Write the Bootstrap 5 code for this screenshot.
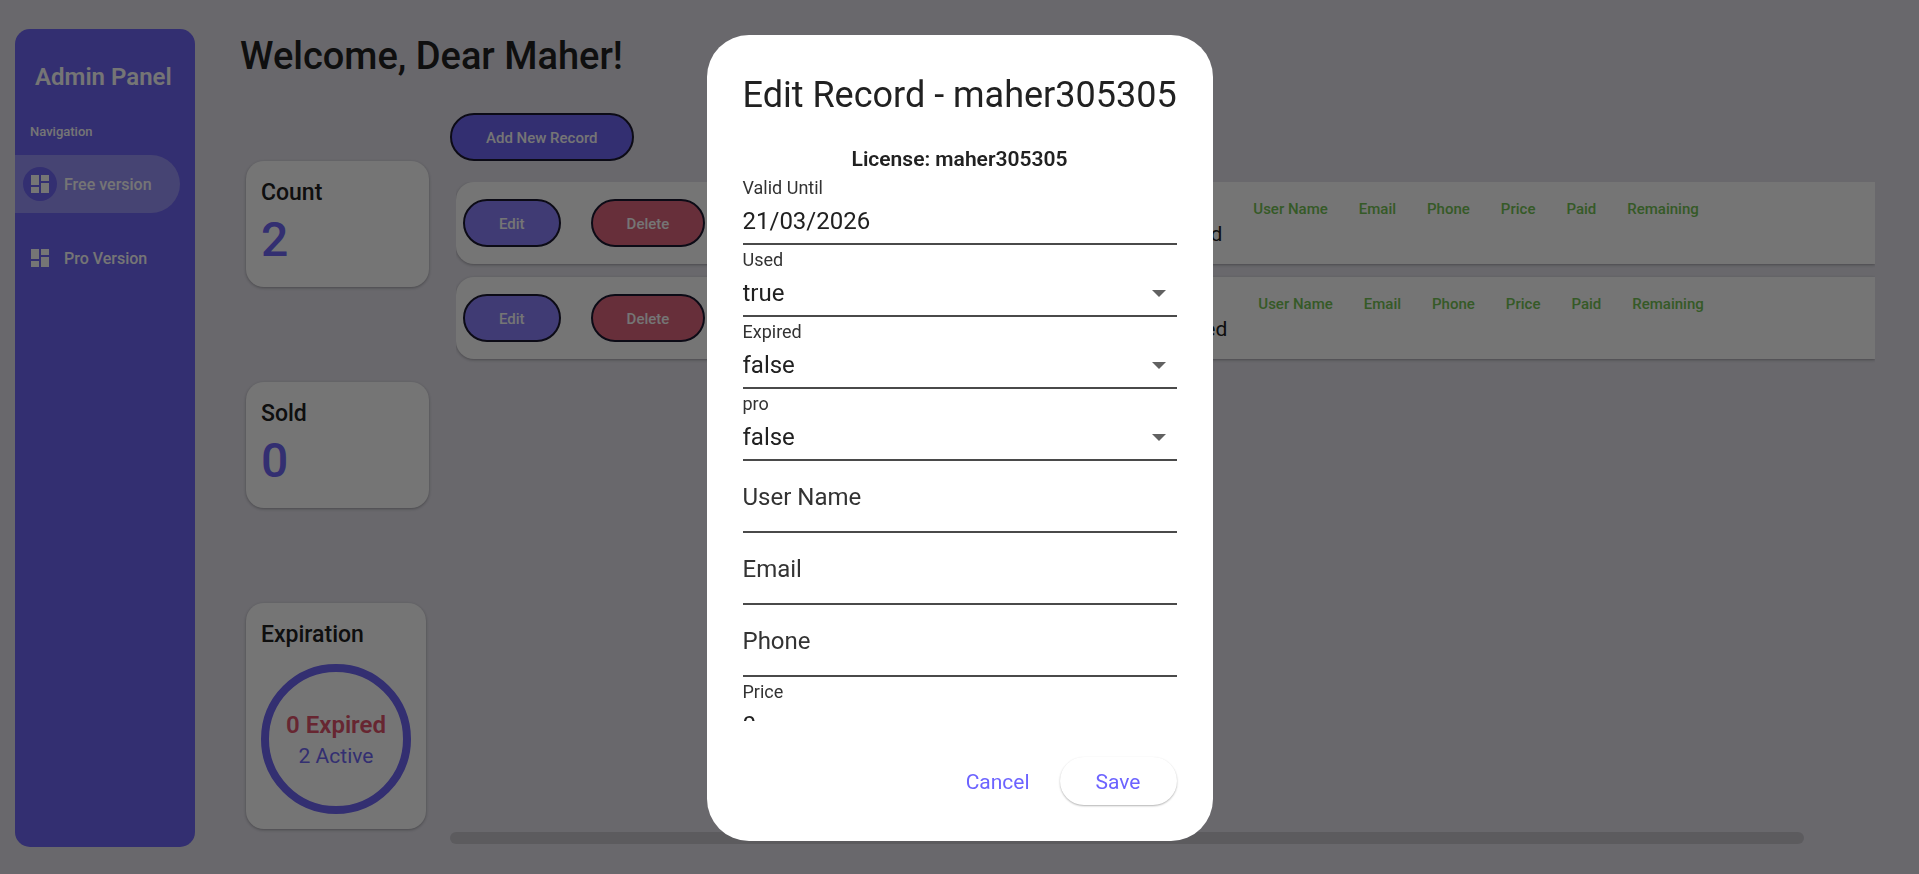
<!DOCTYPE html>
<html lang="en">
<head>
<meta charset="utf-8">
<meta name="viewport" content="width=device-width, initial-scale=1">
<title>Admin Panel</title>
<link href="https://cdn.jsdelivr.net/npm/bootstrap@5.3.0/dist/css/bootstrap.min.css" rel="stylesheet">
<style>
:root { --brand: #6f66f6; --brand-text: #6c63ff; --ink: #212121; }
body { font-family: Roboto, sans-serif; background: #e4e2eb; color: var(--ink); }
button, input, select { font-family: inherit; }

/* Sidebar */
.side-panel { width: 180px; margin: 29px 0 27px 15px; border-radius: 15px; background: var(--brand); color: #fff; }
.side-title { font-size: 24px; line-height: 32px; padding: 32px 20px 0; font-weight: 600; white-space: nowrap; }
.side-section { font-size: 13px; line-height: 20px; padding: 29px 15px 13px; font-weight: 500; }
.side-link { height: 58px; margin: 0 15px 16px 0; padding-left: 8px; gap: 7px; border-radius: 0 29px 29px 0; color: #fff; font-size: 16px; line-height: 24px; font-weight: 500; text-decoration: none; }
.side-link span:last-child { padding-top: 2px; }
.side-link.active { background: #9a94fa; }
.side-icon { width: 34px; height: 34px; border-radius: 50%; }
.active .side-icon { background: var(--brand); }
.side-icon svg { width: 24px; height: 24px; }

/* Main area */
.main-area { padding: 30px 44px 30px 45px; min-width: 0; }
.page-title { font-size: 38px; line-height: 52px; font-weight: 500; }
.stats { width: 210px; padding: 79px 0 0 6px; gap: 95px; }
.tile { border-radius: 18px; background: #fff; box-shadow: 0 1px 3px rgba(0,0,0,.3); }
.stat-tile { width: 183px; height: 126px; padding: 17px 15px; }
.ring-tile { width: 180px; padding: 17px 15px 15px; }
.tile-label { font-size: 23px; line-height: 30px; font-weight: 500; }
.tile-value { font-size: 48px; line-height: 64px; font-weight: 500; color: var(--brand); }
.ring { width: 150px; height: 150px; padding-top: 2px; border: 8px solid var(--brand); border-radius: 50%; margin-top: 14px; }
.ring-expired { font-size: 24px; line-height: 32px; font-weight: 600; color: #e0546c; }
.ring-active { font-size: 21px; line-height: 30px; color: var(--brand); }

/* Records */
.records { padding-top: 31px; min-width: 0; }
.pill { height: 48px; padding: 1px 34px 0; border: 2px solid #1c1930; border-radius: 24px; color: #fff; font-size: 15px; line-height: 20px; font-weight: 500; }
.pill:hover { color: #fff; }
.pill-brand { background: var(--brand); }
.pill-edit { background: #8b82fc; }
.pill-delete { background: #e0677f; margin-left: 30px; }
.record-list { margin: 21px 0 0 6px; gap: 13px; overflow: hidden; padding-bottom: 4px; }
.record { height: 82px; padding-left: 7px; border-radius: 18px 0 0 18px; background: #fff; box-shadow: 0 1px 3px rgba(0,0,0,.3); white-space: nowrap; }
.record-state { width: 517px; font-size: 21px; line-height: 30px; padding-top: 21px; }
.record + .record .record-state { width: 522px; }
.record-fields { gap: 31px; padding-left: 31px; font-size: 15px; line-height: 20px; font-weight: 500; padding-bottom: 29px; color: #74c455; }
.scroll-thumb { width: 95%; height: 12px; border-radius: 6px; background: rgba(0,0,0,.12); }

/* Dialog */
.veil { background: rgba(0,0,0,.54); }
.edit-dialog { max-width: 506px; height: calc(100% - 68px); margin: 35px auto 33px; }
.edit-box { border: 0; border-radius: 42px; background: #fff; color: var(--ink); }
.edit-head { padding: 36px 36px 24px; border: 0; }
.edit-title { font-size: 36px; line-height: 48px; font-weight: 400; white-space: nowrap; }
.edit-body { padding: 0 36px; scrollbar-width: none; }
.edit-license { font-size: 21px; line-height: 28px; padding-top: 2px; font-weight: 600; }
.field { height: 72px; border-bottom: 2px solid #4a4a4a; }
.field label { font-size: 18px; line-height: 24px; padding-top: 3px; color: #333; }
.field input, .field select { display: block; width: 100%; height: 40px; padding: 0; border: 0; outline: 0; appearance: none; color: var(--ink); background: transparent; font-size: 24px; line-height: 36px; }
.field-empty { display: grid; align-items: center; }
.field-empty label, .field-empty input { grid-area: 1 / 1; font-size: 24px; line-height: 36px; padding: 2px 0 0; }
.field .picker { background: url("data:image/svg+xml,%3Csvg xmlns='http://www.w3.org/2000/svg' viewBox='0 0 14 7'%3E%3Cpath d='M0 0h14L7 7z' fill='%23616161'/%3E%3C/svg%3E") no-repeat right 11px center / 14px 7px; }
.edit-foot { padding: 36px; gap: 12px; border: 0; }
.dialog-btn { height: 48px; margin: 0; border: 0; border-radius: 24px; color: var(--brand-text); font-size: 21px; line-height: 30px; }
.dialog-cancel { padding: 2px 18px 0; }
.dialog-save { padding: 2px 36px 0; background: #fff; box-shadow: 0 1px 2px rgba(0,0,0,.3); }
</style>
</head>
<body>
<div class="d-flex min-vh-100">
  <nav class="side-panel flex-shrink-0" aria-label="Main">
    <div class="side-title">Admin Panel</div>
    <div class="side-section">Navigation</div>
    <a href="#free" class="side-link active d-flex align-items-center">
      <span class="side-icon d-flex align-items-center justify-content-center"><svg viewBox="0 0 24 24" fill="currentColor"><path d="M3 13h8V3H3v10zm0 8h8v-6H3v6zm10 0h8V11h-8v10zm0-18v6h8V3h-8z"/></svg></span>
      <span>Free version</span>
    </a>
    <a href="#pro" class="side-link d-flex align-items-center">
      <span class="side-icon d-flex align-items-center justify-content-center"><svg viewBox="0 0 24 24" fill="currentColor"><path d="M3 13h8V3H3v10zm0 8h8v-6H3v6zm10 0h8V11h-8v10zm0-18v6h8V3h-8z"/></svg></span>
      <span>Pro Version</span>
    </a>
  </nav>

  <main class="main-area d-flex flex-column flex-grow-1">
    <h1 class="page-title m-0">Welcome, Dear Maher!</h1>
    <div class="d-flex flex-grow-1">
      <section class="stats d-flex flex-column flex-shrink-0">
        <div class="tile stat-tile"><div class="tile-label">Count</div><div class="tile-value">2</div></div>
        <div class="tile stat-tile"><div class="tile-label">Sold</div><div class="tile-value">0</div></div>
        <div class="tile ring-tile">
          <div class="tile-label">Expiration</div>
          <div class="ring d-flex flex-column align-items-center justify-content-center text-nowrap">
            <div class="ring-expired">0 Expired</div>
            <div class="ring-active">2 Active</div>
          </div>
        </div>
      </section>
      <section class="records d-flex flex-column flex-grow-1">
        <div class="d-flex"><button type="button" class="btn pill pill-brand">Add New Record</button></div>
        <div class="record-list d-flex flex-column">
          <div class="record d-flex align-items-center">
            <button type="button" class="btn pill pill-edit">Edit</button>
            <button type="button" class="btn pill pill-delete">Delete</button>
            <div class="record-state text-end">Expired</div>
            <div class="record-fields d-flex"><span>User Name</span><span>Email</span><span>Phone</span><span>Price</span><span>Paid</span><span>Remaining</span></div>
          </div>
          <div class="record d-flex align-items-center">
            <button type="button" class="btn pill pill-edit">Edit</button>
            <button type="button" class="btn pill pill-delete">Delete</button>
            <div class="record-state text-end">Expired</div>
            <div class="record-fields d-flex"><span>User Name</span><span>Email</span><span>Phone</span><span>Price</span><span>Paid</span><span>Remaining</span></div>
          </div>
        </div>
        <div class="scroll-thumb mt-auto"></div>
      </section>
    </div>
  </main>
</div>

<div class="modal d-block veil" role="dialog" aria-modal="true" aria-labelledby="editTitle">
  <div class="modal-dialog modal-dialog-scrollable edit-dialog">
    <form class="modal-content edit-box">
      <div class="modal-header edit-head"><h2 class="edit-title m-0" id="editTitle">Edit Record - maher305305</h2></div>
      <div class="modal-body edit-body">
        <div class="edit-license text-center">License: maher305305</div>
        <div class="field"><label for="valid">Valid Until</label><input id="valid" type="text" value="21/03/2026"></div>
        <div class="field"><label for="used">Used</label><select id="used" class="picker"><option>true</option></select></div>
        <div class="field"><label for="expired">Expired</label><select id="expired" class="picker"><option>false</option></select></div>
        <div class="field"><label for="pro">pro</label><select id="pro" class="picker"><option>false</option></select></div>
        <div class="field field-empty"><label for="user">User Name</label><input id="user" type="text"></div>
        <div class="field field-empty"><label for="email">Email</label><input id="email" type="email"></div>
        <div class="field field-empty"><label for="phone">Phone</label><input id="phone" type="tel"></div>
        <div class="field"><label for="price">Price</label><input id="price" type="text" value="0"></div>
      </div>
      <div class="modal-footer edit-foot">
        <button type="button" class="btn dialog-btn dialog-cancel">Cancel</button>
        <button type="button" class="btn dialog-btn dialog-save">Save</button>
      </div>
    </form>
  </div>
</div>
<script src="https://cdn.jsdelivr.net/npm/bootstrap@5.3.0/dist/js/bootstrap.bundle.min.js"></script>
</body>
</html>
